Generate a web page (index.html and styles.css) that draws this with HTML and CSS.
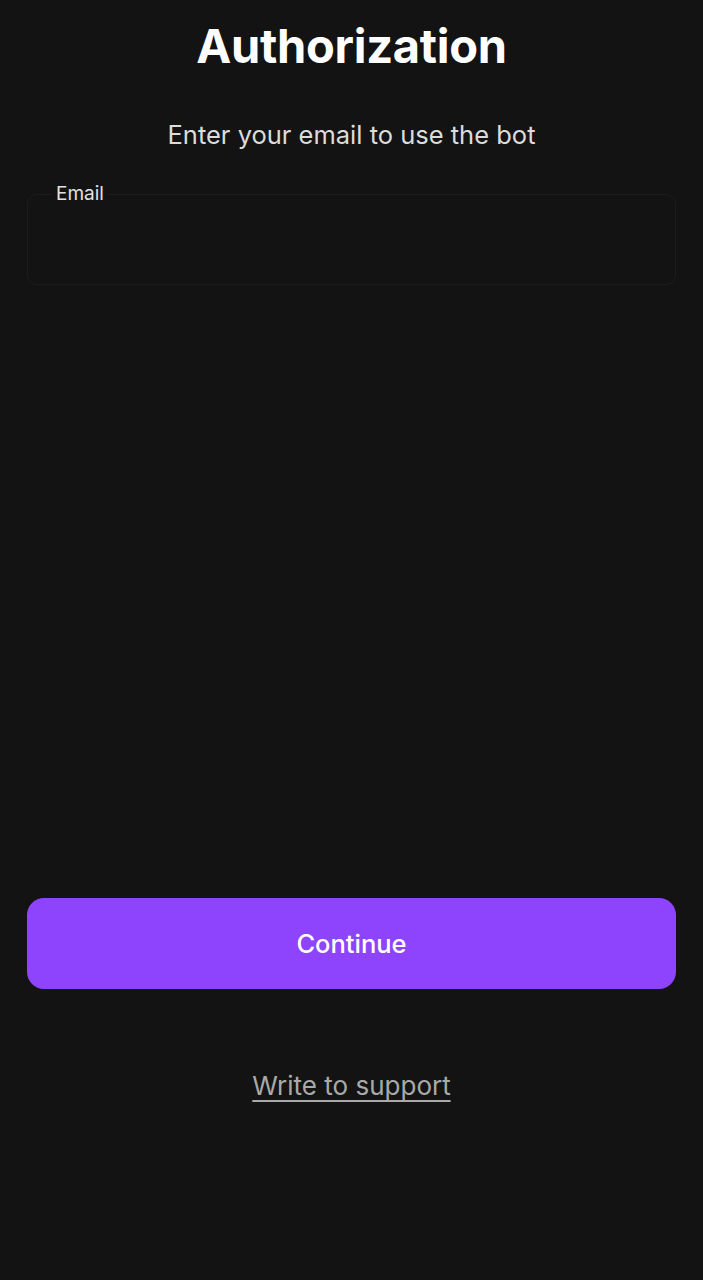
FILE: index.html
```html
<!DOCTYPE html>
<html lang="en">
<head>
<meta charset="utf-8">
<title>Authorization</title>
<link rel="stylesheet" href="styles.css">
</head>
<body>
<main class="page">
  <h1 class="title">Authorization</h1>
  <p class="subtitle">Enter your email to use the bot</p>
  <fieldset class="field">
    <legend class="field-label">Email</legend>
    <input class="field-input" type="email" aria-label="Email">
  </fieldset>
  <div class="spacer"></div>
  <button class="primary-btn" type="button">Continue</button>
  <a class="support-link" href="#">Write to support</a>
</main>
</body>
</html>
```

FILE: styles.css
```css
* { box-sizing: border-box; }
html, body {
  margin: 0;
  padding: 0;
  background: #131313;
}
body {
  font-family: "Inter", "Lato", "Liberation Sans", sans-serif;
  color: #ffffff;
}
.page {
  display: flex;
  flex-direction: column;
  align-items: center;
  min-height: 1280px;
  padding: 0 27px;
}
.title {
  margin: 17px 0 0;
  font-size: 47px;
  line-height: 58px;
  font-weight: 700;
  letter-spacing: -0.3px;
  color: #ffffff;
}
.subtitle {
  margin: 44px 0 0;
  font-size: 25.5px;
  line-height: 32px;
  font-weight: 400;
  color: #dcdcdc;
  letter-spacing: 0;
}
.field {
  width: 100%;
  margin: 34px 0 0;
  padding: 0 24px;
  border: 1.5px solid #1d1d1d;
  border-radius: 10px;
  height: 100px;
}
.field-label {
  padding: 0 4px;
  font-size: 19px;
  line-height: 18px;
  color: #e2e2e2;
}
.field-input {
  width: 100%;
  height: 60px;
  background: transparent;
  border: none;
  outline: none;
  color: #fff;
  font: inherit;
}
.spacer {
  height: 613px;
}
.primary-btn {
  width: 100%;
  height: 91px;
  border: none;
  border-radius: 17px;
  background: #8e44fc;
  color: #ffffff;
  font-family: inherit;
  font-size: 25.5px;
  font-weight: 500;
  letter-spacing: 0;
}
.support-link {
  margin-top: 80px;
  font-size: 26px;
  line-height: 34px;
  color: #a9a9a9;
  text-decoration: underline;
  text-underline-offset: 5px;
  text-decoration-thickness: 1.5px;
  letter-spacing: 0;
}
```
